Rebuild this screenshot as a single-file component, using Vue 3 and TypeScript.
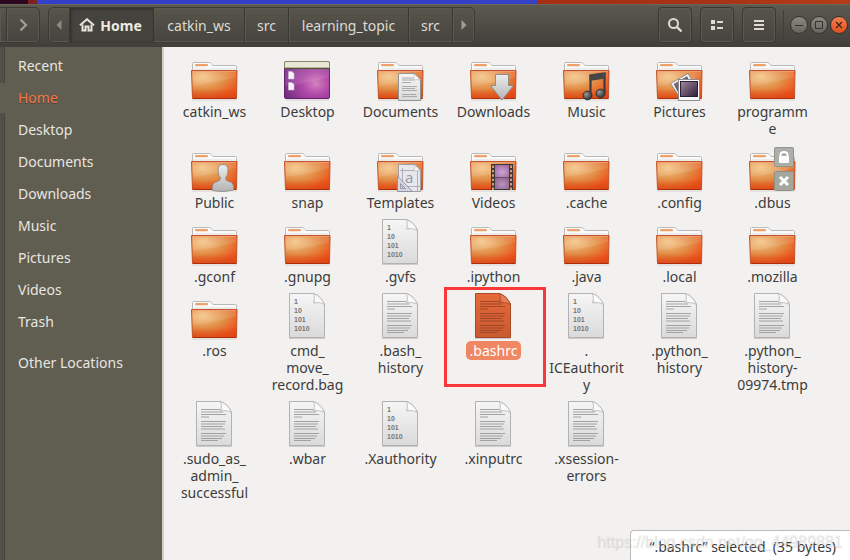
<script setup lang="ts">
import { ref } from 'vue'

type Kind = 'folder' | 'desktop' | 'text' | 'binary'
type Emblem = 'doc' | 'down' | 'music' | 'pics' | 'person' | 'template' | 'film' | 'locked'

interface Entry {
  name: string
  kind: Kind
  emblem?: Emblem
}

const places = ['Recent', 'Home', 'Desktop', 'Documents', 'Downloads', 'Music', 'Pictures', 'Videos', 'Trash']
const activePlace = ref('Home')

const crumbs = [
  { label: 'catkin_ws', size: 'wide' },
  { label: 'src', size: 'short' },
  { label: 'learning_topic', size: 'long' },
  { label: 'src', size: 'short' },
]

const entries: Entry[] = [
  { name: 'catkin_ws', kind: 'folder' },
  { name: 'Desktop', kind: 'desktop' },
  { name: 'Documents', kind: 'folder', emblem: 'doc' },
  { name: 'Downloads', kind: 'folder', emblem: 'down' },
  { name: 'Music', kind: 'folder', emblem: 'music' },
  { name: 'Pictures', kind: 'folder', emblem: 'pics' },
  { name: 'programm\ne', kind: 'folder' },
  { name: 'Public', kind: 'folder', emblem: 'person' },
  { name: 'snap', kind: 'folder' },
  { name: 'Templates', kind: 'folder', emblem: 'template' },
  { name: 'Videos', kind: 'folder', emblem: 'film' },
  { name: '.cache', kind: 'folder' },
  { name: '.config', kind: 'folder' },
  { name: '.dbus', kind: 'folder', emblem: 'locked' },
  { name: '.gconf', kind: 'folder' },
  { name: '.gnupg', kind: 'folder' },
  { name: '.gvfs', kind: 'binary' },
  { name: '.ipython', kind: 'folder' },
  { name: '.java', kind: 'folder' },
  { name: '.local', kind: 'folder' },
  { name: '.mozilla', kind: 'folder' },
  { name: '.ros', kind: 'folder' },
  { name: 'cmd_\nmove_\nrecord.bag', kind: 'binary' },
  { name: '.bash_\nhistory', kind: 'text' },
  { name: '.bashrc', kind: 'text' },
  { name: '.\nICEauthorit\ny', kind: 'binary' },
  { name: '.python_\nhistory', kind: 'text' },
  { name: '.python_\nhistory-\n09974.tmp', kind: 'text' },
  { name: '.sudo_as_\nadmin_\nsuccessful', kind: 'text' },
  { name: '.wbar', kind: 'text' },
  { name: '.Xauthority', kind: 'binary' },
  { name: '.xinputrc', kind: 'text' },
  { name: '.xsession-\nerrors', kind: 'text' },
]
const selected = ref('.bashrc')

const textLines = 'M10 9.5h19M10 12h22M10 14.5h25M10 17h8M10 21.5h25M10 24h24M10 26.5h22M10 29h24M10 33.5h25M10 36h23M10 38.5h21M10 40.5h17'
</script>

<template>
  <div class="screen">
    <svg class="defs" aria-hidden="true">
      <defs>
        <radialGradient id="folderFill" cx="0.25" cy="0.18" r="1.1">
          <stop offset="0" stop-color="#f5cd90" />
          <stop offset="0.45" stop-color="#e29048" />
          <stop offset="0.8" stop-color="#ee521b" />
          <stop offset="1" stop-color="#dc4a1a" />
        </radialGradient>
        <linearGradient id="folderShade" x1="0" y1="0" x2="0" y2="1">
          <stop offset="0" stop-color="#e8682c" stop-opacity="0.25" />
          <stop offset="0.3" stop-color="#e8682c" stop-opacity="0" />
          <stop offset="0.65" stop-color="#d9480f" stop-opacity="0.05" />
          <stop offset="1" stop-color="#d84614" stop-opacity="0.7" />
        </linearGradient>
        <linearGradient id="paper" x1="0" y1="0" x2="0" y2="1">
          <stop offset="0" stop-color="#f6f6f6" />
          <stop offset="1" stop-color="#dadada" />
        </linearGradient>
        <linearGradient id="paperHot" x1="0" y1="0" x2="0" y2="1">
          <stop offset="0" stop-color="#e66a39" />
          <stop offset="1" stop-color="#c95a31" />
        </linearGradient>
        <linearGradient id="curl" x1="0" y1="1" x2="1" y2="0">
          <stop offset="0" stop-color="#d2d2d2" />
          <stop offset="0.35" stop-color="#ffffff" />
          <stop offset="1" stop-color="#dddddd" />
        </linearGradient>
        <linearGradient id="curlHot" x1="0" y1="1" x2="1" y2="0">
          <stop offset="0" stop-color="#b94d25" />
          <stop offset="0.4" stop-color="#f0805a" />
          <stop offset="1" stop-color="#cf6034" />
        </linearGradient>
        <radialGradient id="deskFill" cx="0.7" cy="0.6" r="0.75">
          <stop offset="0" stop-color="#d681bd" />
          <stop offset="0.4" stop-color="#b048a8" />
          <stop offset="1" stop-color="#6f2f80" />
        </radialGradient>
        <linearGradient id="metal" x1="0" y1="0" x2="0" y2="1">
          <stop offset="0" stop-color="#ededed" />
          <stop offset="1" stop-color="#b4b4b4" />
        </linearGradient>
        <linearGradient id="photo" x1="0" y1="0" x2="1" y2="1">
          <stop offset="0" stop-color="#a2889c" />
          <stop offset="1" stop-color="#2c1f3a" />
        </linearGradient>
        <radialGradient id="frame" cx="0.5" cy="0.6" r="0.8">
          <stop offset="0" stop-color="#cfa6d0" />
          <stop offset="1" stop-color="#925f9c" />
        </radialGradient>
        <radialGradient id="note" cx="0.35" cy="0.35" r="0.6">
          <stop offset="0" stop-color="#9a9a9a" />
          <stop offset="1" stop-color="#3b3b3b" />
        </radialGradient>
      </defs>
    </svg>

    <div class="wallpaper" aria-hidden="true"></div>

    <header class="toolbar">
      <div class="history">
        <button class="seg back" aria-label="Back"></button>
        <button class="seg forward" aria-label="Forward">
          <svg width="9" height="14" viewBox="0 0 9 14"><path d="M1.5 1.5 7 7 1.5 12.5" fill="none" stroke="#a19e96" stroke-width="2.2" /></svg>
        </button>
      </div>

      <nav class="path" aria-label="Path">
        <button class="seg arrow" aria-label="Scroll path left">
          <svg width="6" height="10" viewBox="0 0 6 10"><path d="M5.5 0V10L0.5 5z" fill="#8d8a82" /></svg>
        </button>
        <button class="seg home">
          <svg width="16" height="14" viewBox="0 0 16 14">
            <path d="M1 7.3 8 1.3 15 7.3" fill="none" stroke="#e9e5dc" stroke-width="2" />
            <path d="M3.5 6.5V12.5H6.5V8.5H9.5V12.5H12.5V6.5" fill="none" stroke="#e9e5dc" stroke-width="2" />
          </svg>
          <span>Home</span>
        </button>
        <button v-for="(c, i) in crumbs" :key="i" class="seg" :class="c.size">{{ c.label }}</button>
        <button class="seg arrow" aria-label="Scroll path right">
          <svg width="6" height="10" viewBox="0 0 6 10"><path d="M0.5 0V10L5.5 5z" fill="#a09d95" /></svg>
        </button>
      </nav>

      <div class="tools">
        <button class="tool" aria-label="Search">
          <svg width="16" height="16" viewBox="0 0 16 16"><circle cx="6.5" cy="6.500" r="4.5" fill="none" stroke="#dfdbd2" stroke-width="2" /><path d="M9.8 9.8 14.5 14.5" stroke="#dfdbd2" stroke-width="2.4" /></svg>
        </button>
        <button class="tool" aria-label="List view">
          <svg width="16" height="16" viewBox="0 0 16 16" fill="#dfdbd2"><path d="M2 3h4v4H2zM2 9h4v4H2zM8 4h6v2H8zM8 10h6v2H8z" /></svg>
        </button>
        <button class="tool" aria-label="Menu">
          <svg width="16" height="16" viewBox="0 0 16 16" fill="#dfdbd2"><path d="M3 3h10v2H3zM3 7h10v2H3zM3 11h10v2H3z" /></svg>
        </button>
      </div>

      <div class="window-buttons">
        <button class="round" aria-label="Minimize">
          <svg width="8" height="8" viewBox="0 0 8 8"><path d="M0 4.5h8" stroke="#35332d" /></svg>
        </button>
        <button class="round" aria-label="Maximize">
          <svg width="8" height="8" viewBox="0 0 8 8"><path d="M0.5 0.5h7v7H0.5z" fill="none" stroke="#35332d" /></svg>
        </button>
        <button class="round close" aria-label="Close">
          <svg width="8" height="8" viewBox="0 0 8 8"><path d="M1 1l6 6M7 1l-6 6" stroke="#40271c" stroke-width="1.3" /></svg>
        </button>
      </div>
    </header>

    <div class="body">
      <div class="edge" aria-hidden="true"><i class="edge-top"></i><i class="edge-rest"></i></div>
      <nav class="sidebar" aria-label="Places">
        <a
          v-for="p in places"
          :key="p"
          href="#"
          class="place"
          :class="{ active: p === activePlace }"
          @click.prevent="activePlace = p"
        >{{ p }}</a>
        <a href="#" class="place other" @click.prevent>Other Locations</a>
      </nav>

      <main class="files">
        <button
          v-for="e in entries"
          :key="e.name"
          class="entry"
          :class="{ selected: e.name === selected }"
          @click="selected = e.name"
        >
          <svg class="icon" width="47" height="48" viewBox="0 0 47 48" aria-hidden="true">
            <template v-if="e.kind === 'folder'">
              <path d="M1 46.5h45v1H1z" fill="#000" opacity="0.12" />
              <path d="M1.5 19V10.5q0-1 1-1H18.5q1 0 1.6 0.9L22 12.5H44.5q1 0 1 1V19z" fill="#fafafa" stroke="#b9b9b9" />
              <path d="M3 16h41" stroke="#dedede" />
              <rect x="4" y="11" width="13" height="2.2" rx="1" fill="#f0a06c" />
              <path d="M0.5 17.5h45.5L45.5 45.5H1.5z" fill="url(#folderFill)" />
              <path d="M0.5 17.5h45.5L45.5 45.5H1.5z" fill="url(#folderShade)" stroke="#c2532a" />
              <path d="M1.5 18.5H45V24Q25 30 2 33z" fill="#fff" opacity="0.11" />
              <path d="M1.5 18.5H45" stroke="#f3a77c" opacity="0.7" />
              <path d="M2 45.5H45" stroke="#ab2f0c" />
            </template>

            <template v-else-if="e.kind === 'desktop'">
              <path d="M2 46.5h43v1H2z" fill="#000" opacity="0.15" />
              <rect x="0.5" y="8.5" width="45" height="37" rx="1.5" fill="url(#deskFill)" stroke="#6c1f70" />
              <path d="M1 15H45V24Q25 30 1 33z" fill="#fff" opacity="0.11" />
              <path d="M0.5 15V10q0-1.5 1.5-1.5H44q1.5 0 1.5 1.5v5z" fill="#e9e7d6" stroke="#8a8768" />
              <path d="M1 15.5H45" stroke="#55532f" />
              <path d="M4.5 18.5h3.500l2 2v5.500h-5.500zM4.500 29.500h3.500l2 2v5.500h-5.500z" fill="#f7f2f7" stroke="#d4bcd6" stroke-width="0.6" />
            </template>

            <template v-else>
              <path d="M5 46.500h36" stroke="#000" opacity="0.15" />
              <path
                d="M5.500 1.500H29.500Q36 3.500 40.500 12V45.500H5.500z"
                :fill="e.name === selected ? 'url(#paperHot)' : 'url(#paper)'"
                :stroke="e.name === selected ? '#a84a25' : '#b2b2b2'"
              />
              <path v-if="e.kind === 'text'" :d="textLines" :stroke="e.name === selected ? '#9b4526' : '#9c9c9c'" stroke-width="1" opacity="0.9" />
              <g v-else font-family="Liberation Sans, sans-serif" font-size="7" font-weight="700" fill="#777">
                <text x="10" y="12">1</text>
                <text x="10" y="21">10</text>
                <text x="10" y="30">101</text>
                <text x="10" y="39">1010</text>
              </g>
              <path d="M29.500 11Q31.500 6 29.500 1.500Q37 4 40.500 12.500Q36 9.500 29.500 11z" :fill="e.name === selected ? 'url(#curlHot)' : 'url(#curl)'" :stroke="e.name === selected ? '#a84a25' : '#b4b4b4'" stroke-width="0.8" />
            </template>

            <g v-if="e.emblem === 'doc'">
              <path d="M21.500 20.500H37.500L43.500 26.500V47.500H21.500z" fill="url(#paper)" stroke="#929292" />
              <path d="M25 25h11M25 27h12M25 29.500h9M25 33.500h15M25 35.500h13M25 37.500h15M25 41.500h14M25 43.500h15" stroke="#a5a5a5" stroke-width="0.9" />
              <path d="M36.500 27Q38 24 37 20.500L43.500 27Q40 26 36.500 27z" fill="#fff" stroke="#aaa" stroke-width="0.6" />
            </g>
            <path v-else-if="e.emblem === 'down'" d="M25.500 21.500H38.500V32.500H43.500L32 47 20.500 32.500H25.500z" fill="url(#metal)" stroke="#8d8d8d" />
            <g v-else-if="e.emblem === 'music'">
              <path d="M27.500 42V22.500L41.500 20.500V40" fill="none" stroke="#3c3c3c" stroke-width="2.2" />
              <path d="M26.500 22L42.500 20V25.500L26.500 28z" fill="#474747" />
              <ellipse cx="24.500" cy="42.500" rx="4.500" ry="4.300" fill="url(#note)" stroke="#333" />
              <ellipse cx="37.500" cy="40.500" rx="4.500" ry="4.300" fill="url(#note)" stroke="#333" />
            </g>
            <g v-else-if="e.emblem === 'pics'">
              <path d="M14.500 30.500 32 20.500 42 37 25 46z" fill="#f5f5f5" stroke="#8e8e8e" />
              <path d="M17.500 31 31 23.200 36 32 23 41z" fill="url(#photo)" />
              <rect x="22.500" y="26.500" width="21" height="21" fill="#fafafa" stroke="#8e8e8e" />
              <rect x="24.500" y="28.500" width="17" height="15" fill="url(#photo)" stroke="#2b2033" />
            </g>
            <g v-else-if="e.emblem === 'person'" fill="url(#metal)" stroke="#8c8c8c" stroke-width="0.9">
              <path d="M21.500 46.500Q20.500 38.500 26 37.500Q29.500 37 29.500 34Q27 31 27 26Q27 20.500 32 20.500Q37 20.500 37 26Q37 31 34.500 34Q34.500 37 38 37.500Q43.500 38.500 42.500 46Q32 49 21.500 46.500z" />
            </g>
            <g v-else-if="e.emblem === 'template'">
              <path d="M21.500 20.500H38L43.500 26V47.500H21.500z" fill="#e8e8ec" stroke="#a0a0a4" />
              <path d="M25.500 24V44M40.500 27V47M23 26.500H38M24 42.500H43" stroke="#a6a8bc" stroke-width="0.9" fill="none" />
              <text x="28" y="39" font-family="Noto Sans, sans-serif" font-size="15" fill="#9698ad">a</text>
              <path d="M20.500 32 35.500 47.500H20.500zM23.500 39.500V44.500H28.500z" fill="#d4d5e1" fill-rule="evenodd" stroke="#8d8fa3" stroke-width="0.9" />
              <path d="M37 27Q38.500 24 37.500 20.500L43.500 27Q40 26 37 27z" fill="#fff" stroke="#aaa" stroke-width="0.6" />
            </g>
            <g v-else-if="e.emblem === 'film'">
              <rect x="21" y="20" width="22" height="26" fill="#393939" />
              <path d="M23 21.500V46M41 21.500V46" stroke="#e09a68" stroke-width="2" stroke-dasharray="2.4 2" />
              <rect x="25" y="21" width="14" height="12" fill="url(#frame)" />
              <rect x="25" y="33.500" width="14" height="11.500" fill="url(#frame)" opacity="0.85" />
            </g>
            <g v-else-if="e.emblem === 'locked'">
              <rect x="25.500" y="3.500" width="19" height="19" rx="1" fill="#adafa7" stroke="#92948c" />
              <path d="M31.500 13V10.500q0-2.500 3.500-2.500t3.500 2.500V13" fill="none" stroke="#fff" stroke-width="2" />
              <rect x="30" y="12" width="10" height="7" rx="1" fill="#fff" />
              <rect x="25.500" y="27.500" width="19" height="19" rx="1" fill="#a5a79f" stroke="#8e9088" />
              <path d="M31 33l8 8M39 33l-8 8" stroke="#fff" stroke-width="3" />
            </g>
          </svg>
          <span class="name">{{ e.name }}</span>
        </button>
      </main>
    </div>

    <output class="status">“.bashrc” selected&nbsp; (35 bytes)</output>
    <div class="watermark">https://blog.csdn.net/qq_44989881</div>
  </div>
</template>

<style>
body {
  margin: 0;
  background: #f2f1f0;
}
</style>

<style scoped>
.screen {
  position: relative;
  display: flex;
  flex-direction: column;
  min-height: 100vh;
  overflow: hidden;
  font: 14px/17px "Noto Sans", sans-serif;
  color: #3c3c3c;
}
.defs {
  position: absolute;
  width: 0;
  height: 0;
}
button {
  margin: 0;
  padding: 0;
  border: 0;
  background: none;
  font: inherit;
  color: inherit;
}
.wallpaper {
  height: 4px;
  background: linear-gradient(90deg, #2c0820 0 28px, #7e1f22 28px 37px, #3540c8 37px 538px, #a52e14 538px, #a83416 85%, #b43c18);
}

/* toolbar */
.toolbar {
  display: flex;
  align-items: center;
  height: 43px;
  padding: 0 2px 1px 0;
  box-sizing: border-box;
  background: linear-gradient(#5d5a50, #3f3e39);
  box-shadow: inset 0 1px #69665b;
  color: #dfdbd2;
}
.history,
.path {
  display: flex;
  height: 36px;
  box-sizing: border-box;
  border: 1px solid #3b3a35;
  border-radius: 5px;
  background: linear-gradient(#58554c, #45443e);
  box-shadow: inset 0 0 0 1px #5a584f;
}
.history {
  width: 40px;
  border-left: 0;
  border-radius: 0 5px 5px 0;
}
.path {
  margin-left: 8px;
}
.seg {
  display: flex;
  align-items: center;
  justify-content: center;
  border-right: 1px solid #383732;
  box-shadow: 1px 0 0 #5d5b52;
}
.seg:last-child {
  border-right: 0;
  box-shadow: none;
}
.back { width: 7px; }
.forward { flex: 1; }
.arrow { width: 21px; }
.home {
  gap: 5px;
  width: 84px;
  padding-right: 2px;
  box-sizing: border-box;
  background: #45433d;
  box-shadow: inset 1px 1px 3px #2d2c28;
  font-weight: 700;
  color: #eeebe3;
}
.wide { width: 91px; }
.short { width: 44px; }
.long { width: 120px; }
.tools {
  display: flex;
  gap: 8px;
  margin-left: auto;
}
.tool {
  display: grid;
  place-items: center;
  width: 34px;
  height: 36px;
  border: 1px solid #383732;
  border-radius: 4px;
  background: linear-gradient(#58554c, #45443e);
  box-shadow: inset 0 0 0 1px #5c5a51;
}
.window-buttons {
  display: flex;
  align-items: center;
  gap: 2px;
  height: 30px;
  margin-left: 7px;
  padding-left: 6px;
  border-left: 1px solid #403f39;
}
.round {
  display: grid;
  place-items: center;
  width: 18px;
  height: 18px;
  border: 1px solid #35342f;
  border-radius: 50%;
  background: linear-gradient(#8b8981, #66645d);
}
.close {
  background: linear-gradient(#f47d52, #e4511f);
}

/* sidebar */
.body {
  display: flex;
  flex: 1;
}
.edge {
  display: flex;
  flex-direction: column;
  gap: 30px;
  width: 5px;
  background: #605d51;
}
.edge-top,
.edge-rest {
  background: #504f4a;
  border-right: 1px solid #45443f;
}
.edge-top { height: 36px; }
.edge-rest { flex: 1; }
.sidebar {
  display: flex;
  flex-direction: column;
  width: 157px;
  padding-top: 3px;
  box-sizing: border-box;
  background: #605d51;
}
.place {
  padding-left: 13px;
  line-height: 32px;
  color: #e8e6e0;
  text-decoration: none;
}
.place.active {
  color: #f07746;
  text-shadow: 0 1px #45433b;
}
.other {
  margin-top: 9px;
}

/* file grid */
.files {
  flex: 1;
  display: grid;
  grid-template-columns: repeat(auto-fill, 93px);
  align-content: start;
  row-gap: 6px;
  padding: 6px 4px 0;
  border-left: 2px solid #cfcdca;
  background: #f2f1f0;
}
.entry {
  position: relative;
  display: flex;
  flex-direction: column;
  align-items: center;
  gap: 1px;
}
.icon {
  display: block;
}
.name {
  padding: 1px 4px;
  border-radius: 5px;
  white-space: pre;
  text-align: center;
}
.selected .name {
  background: #f08763;
  color: #fff;
}
.selected::after {
  content: "";
  position: absolute;
  top: -5px;
  left: -3px;
  width: 96px;
  height: 94px;
  border: 3px solid #fb3838;
}

/* overlays */
.status {
  position: absolute;
  right: 0;
  bottom: 0;
  padding: 7px 14px 5px 18px;
  border: 1px solid #bdbbb8;
  border-width: 1px 0 0 1px;
  border-top-left-radius: 4px;
  background: #fff;
}
.watermark {
  position: absolute;
  right: 8px;
  bottom: 9px;
  font: 16px/18px "Liberation Sans", sans-serif;
  color: rgba(232, 232, 232, 0.5);
  text-shadow: 1px 1px 1px rgba(0, 0, 0, 0.12);
  pointer-events: none;
}
</style>
